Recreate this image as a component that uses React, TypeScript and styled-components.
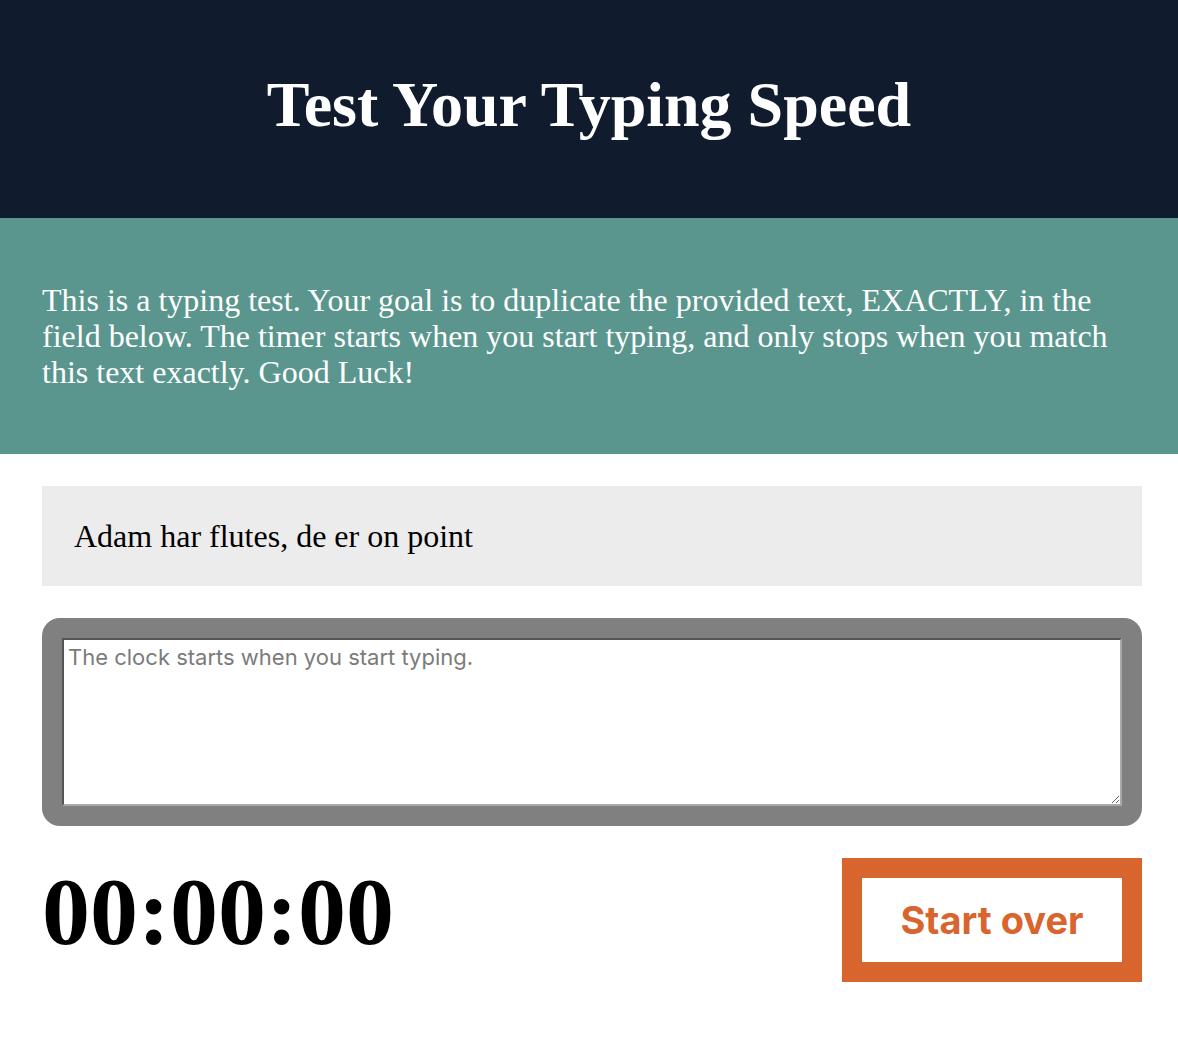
import React, { useEffect, useState } from 'react';
import styled, { createGlobalStyle } from 'styled-components';

const GlobalStyle = createGlobalStyle`
  html, body {
    margin: 0;
    padding: 0;
    background: #ffffff;
    font-family: "Liberation Serif", "Times New Roman", serif;
  }
  * {
    box-sizing: border-box;
  }
`;

const SAMPLE_TEXT = 'Adam har flutes, de er on point';

const pad = (n: number) => (n < 10 ? `0${n}` : `${n}`);

const formatTime = (hundredths: number) => {
  const minutes = Math.floor(hundredths / 6000);
  const seconds = Math.floor((hundredths % 6000) / 100);
  const rest = hundredths % 100;
  return `${pad(minutes)}:${pad(seconds)}:${pad(rest)}`;
};

const App: React.FC = () => {
  const [value, setValue] = useState('');
  const [ticks, setTicks] = useState(0);
  const [running, setRunning] = useState(false);

  useEffect(() => {
    if (!running) return;
    const id = window.setInterval(() => setTicks((t) => t + 1), 10);
    return () => window.clearInterval(id);
  }, [running]);

  const handleChange = (e: React.ChangeEvent<HTMLTextAreaElement>) => {
    const next = e.target.value;
    setValue(next);
    if (!running && next.length > 0 && next !== SAMPLE_TEXT) setRunning(true);
    if (next === SAMPLE_TEXT) setRunning(false);
  };

  const reset = () => {
    setValue('');
    setTicks(0);
    setRunning(false);
  };

  const matches = value === SAMPLE_TEXT;
  const partial = SAMPLE_TEXT.startsWith(value);
  const frame = matches ? '#429890' : value && !partial ? '#e95d0f' : value ? '#65ccf3' : '#808080';

  return (
    <>
      <GlobalStyle />
      <Header>
        <Title>Test Your Typing Speed</Title>
      </Header>
      <Intro>
        <IntroText>
          This is a typing test. Your goal is to duplicate the provided text, EXACTLY, in the field
          below. The timer starts when you start typing, and only stops when you match this text
          exactly. Good Luck!
        </IntroText>
      </Intro>
      <Main>
        <OriginText>{SAMPLE_TEXT}</OriginText>
        <TextWrapper $color={frame}>
          <TypeArea
            value={value}
            onChange={handleChange}
            placeholder="The clock starts when you start typing."
          />
        </TextWrapper>
        <MetaRow>
          <Timer>{formatTime(ticks)}</Timer>
          <ResetButton onClick={reset}>Start over</ResetButton>
        </MetaRow>
      </Main>
    </>
  );
};

const Header = styled.header`
  background-color: #111b2e;
  height: 218px;
  display: flex;
  align-items: center;
  justify-content: center;
  padding-bottom: 8px;
`;

const Title = styled.h1`
  margin: 0;
  color: #ffffff;
  font-size: 64px;
  font-weight: 700;
`;

const Intro = styled.section`
  background-color: #5a968e;
  padding: 64px 42px;
`;

const IntroText = styled.p`
  margin: 0;
  color: #ffffff;
  font-size: 32px;
  line-height: 36px;
`;

const Main = styled.main`
  padding: 32px 36px 32px 42px;
  display: flex;
  flex-direction: column;
  gap: 32px;
`;

const OriginText = styled.div`
  background-color: #ececec;
  height: 100px;
  display: flex;
  align-items: center;
  padding: 0 32px;
  font-size: 32px;
  color: #000000;
`;

const TextWrapper = styled.div<{ $color: string }>`
  background-color: ${(p) => p.$color};
  border-radius: 18px;
  padding: 20px;
`;

const TypeArea = styled.textarea`
  display: block;
  width: 100%;
  height: 168px;
  border: 2px inset #a9a9a9;
  padding: 4px;
  font-family: Inter, "Noto Sans", sans-serif;
  font-size: 22px;
  color: #222222;
  background: #ffffff;
  outline: none;

  &::placeholder {
    color: #7b7b7b;
  }
`;

const MetaRow = styled.div`
  display: flex;
  align-items: center;
  justify-content: space-between;
`;

const Timer = styled.div`
  font-size: 96px;
  font-weight: 700;
  color: #000000;
  line-height: 1;
  margin-bottom: 16px;
`;

const ResetButton = styled.button`
  width: 300px;
  height: 124px;
  background: #ffffff;
  border: 20px solid #d9652e;
  color: #d9652e;
  font-family: Inter, "Noto Sans", sans-serif;
  font-size: 38px;
  font-weight: 700;
  cursor: pointer;
`;

export default App;
